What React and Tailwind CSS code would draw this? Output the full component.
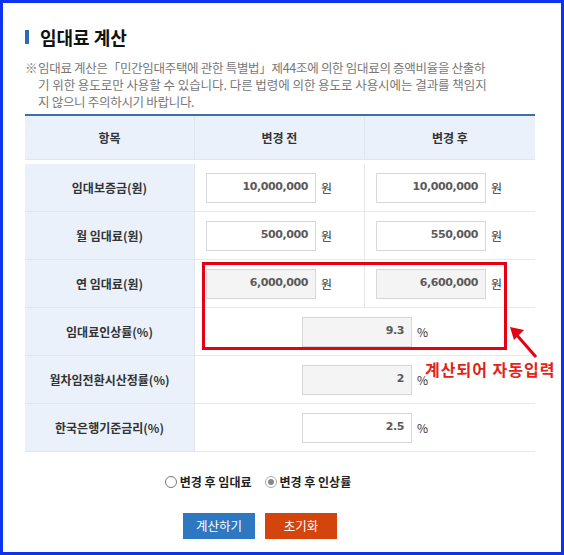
const rows = [
  { label: '임대보증금(원)', before: '10,000,000', after: '10,000,000' },
  { label: '월 임대료(원)', before: '500,000', after: '550,000' },
  { label: '연 임대료(원)', before: '6,000,000', after: '6,600,000', readOnly: true },
]

const pctRows = [
  { label: '임대료인상률(%)', value: '9.3', readOnly: true },
  { label: '월차임전환시산정률(%)', value: '2', readOnly: true },
  { label: '한국은행기준금리(%)', value: '2.5' },
]

function NumBox({ value, readOnly }) {
  return (
    <div
      className={`w-[110px] h-[30px] border border-[#d8d8d8] flex items-center justify-end pr-[7px] font-['DejaVu_Sans',sans-serif] font-bold text-[11px] tracking-[-0.4px] text-[#5a5a5a] ${
        readOnly ? 'bg-[#f4f4f4]' : 'bg-white'
      }`}
    >
      {value}
    </div>
  )
}

function Label({ children }) {
  return (
    <div className="bg-[#eaf1fb] border-b border-r border-[#e2e6ec] flex items-center justify-center text-[12px] font-bold text-[#333]">
      {children}
    </div>
  )
}

export default function App() {
  return (
    <div className="relative w-[564px] h-[555px] bg-white border-[3px] border-[#0c33ee] font-['Noto_Sans_CJK_KR',sans-serif] overflow-hidden">
      <div className="pl-[22px] pr-[26px] pt-[22px]">
        <div className="flex items-center h-[24px]">
          <span className="w-[4px] h-[14px] bg-[#2b6cb5] mr-[11px]" />
          <h1 className="text-[18px] font-bold text-[#111] leading-none">임대료 계산</h1>
        </div>

        <div className="mt-[10px] flex text-[12.5px] leading-[17px] text-[#777] tracking-[-0.3px]">
          <span className="w-[13px] shrink-0">※</span>
          <p className="whitespace-nowrap">
            임대료 계산은「민간임대주택에 관한 특별법」제44조에 의한 임대료의 증액비율을 산출하
            <br />
            <span className="tracking-[-0.05px]">
              기 위한 용도로만 사용할 수 있습니다. 다른 법령에 의한 용도로 사용시에는 결과를 책임지
            </span>
            <br />
            지 않으니 주의하시기 바랍니다.
          </p>
        </div>

        <div className="mt-[4px] border-t-2 border-[#3c70ad] grid grid-cols-[170px_170px_170px] auto-rows-[48px]">
          <div className="h-[44px] bg-[#eaf1fb] border-b border-r border-[#e2e6ec] flex items-center justify-center text-[12px] font-bold text-[#333]">
            항목
          </div>
          <div className="h-[44px] bg-[#eaf1fb] border-b border-r border-[#e2e6ec] flex items-center justify-center text-[12px] font-bold text-[#333]">
            변경 전
          </div>
          <div className="h-[44px] bg-[#eaf1fb] border-b border-[#e2e6ec] flex items-center justify-center text-[12px] font-bold text-[#333]">
            변경 후
          </div>

          {rows.map((r) => (
            <div key={r.label} className="contents">
              <Label>{r.label}</Label>
              <div className="border-b border-r border-[#e8e8e8] flex items-center pl-[11px] gap-[5px]">
                <NumBox value={r.before} readOnly={r.readOnly} />
                <span className="text-[12px] text-[#333]">원</span>
              </div>
              <div className="border-b border-[#e8e8e8] flex items-center pl-[11px] gap-[5px]">
                <NumBox value={r.after} readOnly={r.readOnly} />
                <span className="text-[12px] text-[#333]">원</span>
              </div>
            </div>
          ))}

          {pctRows.map((r) => (
            <div key={r.label} className="contents">
              <Label>{r.label}</Label>
              <div className="col-span-2 border-b border-[#e8e8e8] flex items-center justify-center gap-[5px]">
                <NumBox value={r.value} readOnly={r.readOnly} />
                <span className="text-[12px] text-[#333]">%</span>
              </div>
            </div>
          ))}
        </div>

        <div className="mt-[20px] pr-[44px] flex justify-center items-center h-[20px] text-[12px] font-bold text-[#222]">
          <label className="flex items-center gap-[3px]">
            <span className="w-[12px] h-[12px] rounded-full border border-[#777] bg-white" />
            변경 후 임대료
          </label>
          <label className="flex items-center gap-[3px] ml-[13px]">
            <span className="w-[12px] h-[12px] rounded-full border border-[#aaa] bg-white flex items-center justify-center">
              <span className="w-[6px] h-[6px] rounded-full bg-[#888]" />
            </span>
            변경 후 인상률
          </label>
        </div>

        <div className="mt-[21px] pr-[40px] flex justify-center gap-[10px]">
          <button className="w-[72px] h-[26px] bg-[#2d78c1] text-white text-[12.5px]">계산하기</button>
          <button className="w-[72px] h-[26px] bg-[#d4450d] text-white text-[12.5px]">초기화</button>
        </div>
      </div>

      <div className="absolute left-[199px] top-[259px] w-[305px] h-[88px] border-[3px] border-[#e50012]" />
      <svg className="absolute left-[503px] top-[320px]" width="36" height="40" viewBox="0 0 36 40">
        <line x1="9" y1="10" x2="30" y2="34" stroke="#e50012" strokeWidth="3" />
        <polygon points="4,4 18,7 8,17" fill="#e50012" />
      </svg>
      <div className="absolute left-[422px] top-[356px] text-[16px] tracking-[1px] font-bold text-[#e2231a] leading-[20px] whitespace-nowrap">
        계산되어 자동입력
      </div>
    </div>
  )
}
